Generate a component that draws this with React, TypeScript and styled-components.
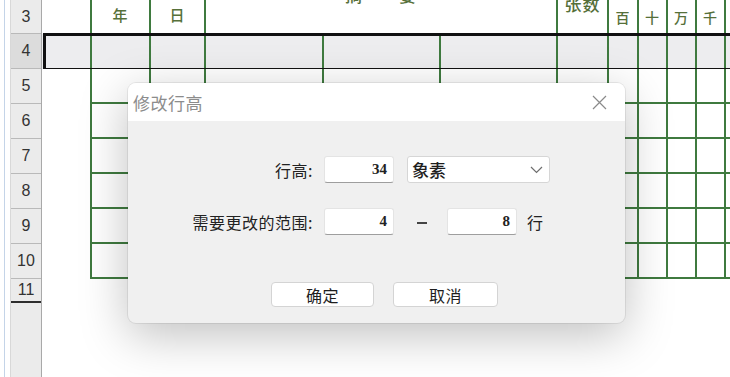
import React from 'react'
import styled, { createGlobalStyle } from 'styled-components'

const GREEN = '#3f7a3f'
const COLS = '48px 59px 55px 118px 117px 117px 51px 30px 29px 29px 29px 29px'
const CJK = `"Noto Sans CJK SC", "Noto Sans", sans-serif`

const GlobalStyle = createGlobalStyle`
  html, body {
    margin: 0;
    padding: 0;
    background: #fff;
  }
  body {
    font-family: ${CJK};
  }
`

const Screen = styled.div`
  position: relative;
  width: 730px;
  height: 377px;
  overflow: hidden;
  display: flex;
  background: #fff;
`

const Gutter = styled.div`
  width: 10px;
  flex-shrink: 0;
  background: linear-gradient(to right, #fff 4px, #c4d4e8 4px, #c4d4e8 5px, #fff 5px);
`

const RowHeads = styled.div`
  width: 32px;
  flex-shrink: 0;
  display: flex;
  flex-direction: column;
  background: #ebebeb;
  border-right: 1px solid #a9a9a9;
  box-sizing: border-box;
  border-left: 1px solid #d8d8d8;
`

const RowNum = styled.div<{ $h: number; $active?: boolean; $last?: boolean }>`
  height: ${p => p.$h}px;
  box-sizing: border-box;
  display: flex;
  align-items: center;
  justify-content: center;
  font-family: "Liberation Sans", Arial, sans-serif;
  font-size: 16px;
  color: #333;
  background: ${p => (p.$active ? '#dcdcdc' : 'transparent')};
  border-bottom: ${p => (p.$last ? '2px solid #2e2e2e' : '1px solid #b9b9b9')};
`

const Sheet = styled.div`
  flex: 1;
  display: flex;
  flex-direction: column;
  overflow: hidden;
`

const Row = styled.div<{ $h: number; $selected?: boolean }>`
  display: grid;
  grid-template-columns: ${COLS};
  height: ${p => p.$h}px;
  flex-shrink: 0;
  position: relative;
  background: ${p => (p.$selected ? '#ededef' : '#fff')};

  ${p =>
    p.$selected &&
    `
    &::after {
      content: "";
      position: absolute;
      top: -1px;
      left: 1px;
      right: -10px;
      bottom: -2px;
      border: 3px solid #111;
      pointer-events: none;
    }
  `}
`

const Cell = styled.div<{ $v?: boolean; $b?: boolean; $span?: number }>`
  box-sizing: border-box;
  border-left: ${p => (p.$v ? `2px solid ${GREEN}` : 'none')};
  border-bottom: ${p => (p.$b ? `2px solid ${GREEN}` : 'none')};
  grid-column: ${p => (p.$span ? `span ${p.$span}` : 'auto')};
  display: flex;
  justify-content: center;
  overflow: hidden;
`

const HeadText = styled.span<{ $top?: number; $size?: number }>`
  margin-top: ${p => p.$top ?? 7}px;
  font-size: ${p => p.$size ?? 15}px;
  line-height: 1;
  font-weight: 500;
  color: #56703a;
  letter-spacing: 1px;
  white-space: nowrap;
`

const Dialog = styled.div`
  position: absolute;
  left: 128px;
  top: 83px;
  width: 497px;
  height: 240px;
  border-radius: 8px;
  overflow: hidden;
  display: flex;
  flex-direction: column;
  background: #f0f0f0;
  box-shadow: 0 12px 48px rgba(0, 0, 0, 0.25), 0 0 0 1px rgba(0, 0, 0, 0.07);
`

const TitleBar = styled.div`
  height: 38px;
  flex-shrink: 0;
  background: #fff;
  display: flex;
  align-items: center;
  justify-content: space-between;
  padding: 0 18px 0 5px;
`

const Title = styled.span`
  font-size: 17px;
  color: #8c8c8c;
  letter-spacing: 0.5px;
`

const Body = styled.div`
  display: flex;
  flex-direction: column;
  padding-top: 35px;
`

const FormRow = styled.div<{ $gap?: number }>`
  display: flex;
  align-items: center;
  height: 27px;
  margin-bottom: ${p => p.$gap ?? 0}px;
`

const Label = styled.span`
  width: 185px;
  flex-shrink: 0;
  text-align: right;
  font-size: 16px;
  color: #222;
  letter-spacing: 0.5px;
`

const NumInput = styled.div<{ $ml: number }>`
  width: 70px;
  height: 27px;
  margin-left: ${p => p.$ml}px;
  box-sizing: border-box;
  background: #fff;
  border: 1px solid #e4e4e4;
  border-bottom-color: #9e9e9e;
  border-radius: 3px;
  display: flex;
  align-items: center;
  justify-content: flex-end;
  padding-right: 6px;
  font-family: "Liberation Serif", serif;
  font-weight: bold;
  font-size: 15px;
  color: #222;
`

const Select = styled.div`
  width: 143px;
  height: 27px;
  margin-left: 13px;
  box-sizing: border-box;
  background: #fff;
  border: 1px solid #d6d6d6;
  border-radius: 3px;
  display: flex;
  align-items: center;
  justify-content: space-between;
  padding: 0 6px 0 4px;
  font-size: 17px;
  font-weight: 500;
  color: #1e1e1e;
`

const Dash = styled.span`
  width: 10px;
  margin-left: 23px;
  height: 2px;
  background: #444;
  transform: translateY(1px);
`

const Unit = styled.span`
  margin-left: 10px;
  font-size: 16px;
  color: #222;
`

const Buttons = styled.div`
  display: flex;
  gap: 19px;
  padding-left: 143px;
`

const Button = styled.div<{ $w: number }>`
  width: ${p => p.$w}px;
  height: 25px;
  box-sizing: border-box;
  background: #fff;
  border: 1px solid #d4d4d4;
  border-radius: 4px;
  display: flex;
  align-items: center;
  justify-content: center;
  font-size: 16px;
  color: #1e1e1e;
  letter-spacing: 0.5px;
`

const rowHeights: [string, number][] = [
  ['3', 34],
  ['4', 35],
  ['5', 35],
  ['6', 35],
  ['7', 35],
  ['8', 35],
  ['9', 35],
  ['10', 35],
  ['11', 24],
]

const CloseIcon = () => (
  <svg width="15" height="15" viewBox="0 0 15 15">
    <path d="M1 1 L14 14 M14 1 L1 14" stroke="#8a8a8a" strokeWidth="1.2" fill="none" />
  </svg>
)

const Chevron = () => (
  <svg width="13" height="8" viewBox="0 0 13 8">
    <path d="M1 1 L6.5 6.5 L12 1" stroke="#6f6f6f" strokeWidth="1.2" fill="none" />
  </svg>
)

const DataRow = () => (
  <Row $h={35}>
    <Cell />
    {Array.from({ length: 11 }).map((_, i) => (
      <Cell key={i} $v $b />
    ))}
  </Row>
)

export default function App() {
  return (
    <Screen>
      <GlobalStyle />
      <Gutter />
      <RowHeads>
        {rowHeights.map(([n, h]) => (
          <RowNum key={n} $h={h} $active={n === '4'} $last={n === '11'}>
            {n}
          </RowNum>
        ))}
      </RowHeads>
      <Sheet>
        <Row $h={34}>
          <Cell />
          <Cell $v><HeadText>年</HeadText></Cell>
          <Cell $v><HeadText>日</HeadText></Cell>
          <Cell $v $span={3}><HeadText $top={-14} $size={17}>摘　　要</HeadText></Cell>
          <Cell $v><HeadText $top={-5} $size={17}>张数</HeadText></Cell>
          <Cell $v><HeadText $top={10} $size={14}>百</HeadText></Cell>
          <Cell $v><HeadText $top={10} $size={14}>十</HeadText></Cell>
          <Cell $v><HeadText $top={10} $size={14}>万</HeadText></Cell>
          <Cell $v><HeadText $top={10} $size={14}>千</HeadText></Cell>
          <Cell $v />
        </Row>
        <Row $h={35} $selected>
          <Cell />
          {Array.from({ length: 11 }).map((_, i) => (
            <Cell key={i} $v />
          ))}
        </Row>
        <DataRow />
        <DataRow />
        <DataRow />
        <DataRow />
        <DataRow />
        <DataRow />
        <Row $h={24} />
      </Sheet>

      <Dialog>
        <TitleBar>
          <Title>修改行高</Title>
          <CloseIcon />
        </TitleBar>
        <Body>
          <FormRow $gap={25}>
            <Label>行高:</Label>
            <NumInput $ml={11}>34</NumInput>
            <Select>
              <span>象素</span>
              <Chevron />
            </Select>
          </FormRow>
          <FormRow $gap={47}>
            <Label>需要更改的范围:</Label>
            <NumInput $ml={11}>4</NumInput>
            <Dash />
            <NumInput $ml={20}>8</NumInput>
            <Unit>行</Unit>
          </FormRow>
          <Buttons>
            <Button $w={103}>确定</Button>
            <Button $w={105}>取消</Button>
          </Buttons>
        </Body>
      </Dialog>
    </Screen>
  )
}
